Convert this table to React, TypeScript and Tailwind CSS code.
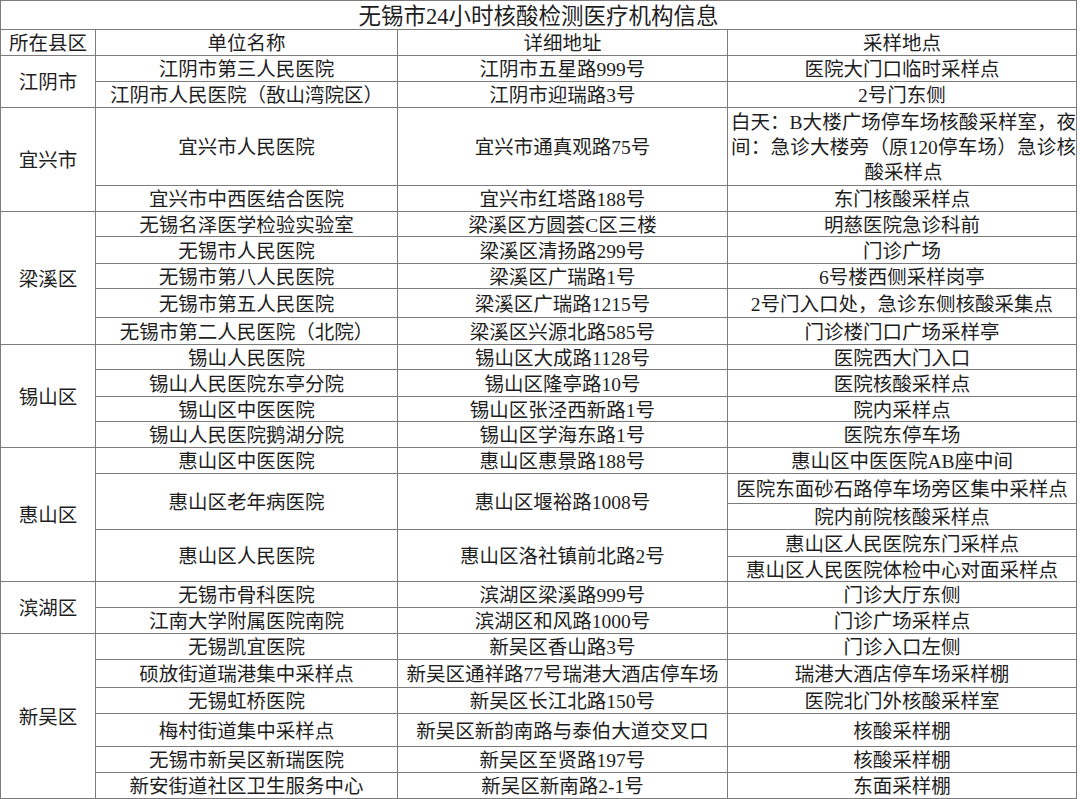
import React from "react";

type Entry = { name: string; addr: string; sites: string[] };
type Group = { district: string; entries: Entry[] };

const groups: Group[] = [
  {
    district: "江阴市",
    entries: [
      { name: "江阴市第三人民医院", addr: "江阴市五星路999号", sites: ["医院大门口临时采样点"] },
      { name: "江阴市人民医院（敔山湾院区）", addr: "江阴市迎瑞路3号", sites: ["2号门东侧"] },
    ],
  },
  {
    district: "宜兴市",
    entries: [
      { name: "宜兴市人民医院", addr: "宜兴市通真观路75号", sites: ["__MULTI__"] },
      { name: "宜兴市中西医结合医院", addr: "宜兴市红塔路188号", sites: ["东门核酸采样点"] },
    ],
  },
  {
    district: "梁溪区",
    entries: [
      { name: "无锡名泽医学检验实验室", addr: "梁溪区方圆荟C区三楼", sites: ["明慈医院急诊科前"] },
      { name: "无锡市人民医院", addr: "梁溪区清扬路299号", sites: ["门诊广场"] },
      { name: "无锡市第八人民医院", addr: "梁溪区广瑞路1号", sites: ["6号楼西侧采样岗亭"] },
      { name: "无锡市第五人民医院", addr: "梁溪区广瑞路1215号", sites: ["2号门入口处，急诊东侧核酸采集点"] },
      { name: "无锡市第二人民医院（北院）", addr: "梁溪区兴源北路585号", sites: ["门诊楼门口广场采样亭"] },
    ],
  },
  {
    district: "锡山区",
    entries: [
      { name: "锡山人民医院", addr: "锡山区大成路1128号", sites: ["医院西大门入口"] },
      { name: "锡山人民医院东亭分院", addr: "锡山区隆亭路10号", sites: ["医院核酸采样点"] },
      { name: "锡山区中医医院", addr: "锡山区张泾西新路1号", sites: ["院内采样点"] },
      { name: "锡山人民医院鹅湖分院", addr: "锡山区学海东路1号", sites: ["医院东停车场"] },
    ],
  },
  {
    district: "惠山区",
    entries: [
      { name: "惠山区中医医院", addr: "惠山区惠景路188号", sites: ["惠山区中医医院AB座中间"] },
      { name: "惠山区老年病医院", addr: "惠山区堰裕路1008号", sites: ["医院东面砂石路停车场旁区集中采样点", "院内前院核酸采样点"] },
      { name: "惠山区人民医院", addr: "惠山区洛社镇前北路2号", sites: ["惠山区人民医院东门采样点", "惠山区人民医院体检中心对面采样点"] },
    ],
  },
  {
    district: "滨湖区",
    entries: [
      { name: "无锡市骨科医院", addr: "滨湖区梁溪路999号", sites: ["门诊大厅东侧"] },
      { name: "江南大学附属医院南院", addr: "滨湖区和风路1000号", sites: ["门诊广场采样点"] },
    ],
  },
  {
    district: "新吴区",
    entries: [
      { name: "无锡凯宜医院", addr: "新吴区香山路3号", sites: ["门诊入口左侧"] },
      { name: "硕放街道瑞港集中采样点", addr: "新吴区通祥路77号瑞港大酒店停车场", sites: ["瑞港大酒店停车场采样棚"] },
      { name: "无锡虹桥医院", addr: "新吴区长江北路150号", sites: ["医院北门外核酸采样室"] },
      { name: "梅村街道集中采样点", addr: "新吴区新韵南路与泰伯大道交叉口", sites: ["核酸采样棚"] },
      { name: "无锡市新吴区新瑞医院", addr: "新吴区至贤路197号", sites: ["核酸采样棚"] },
      { name: "新安街道社区卫生服务中心", addr: "新吴区新南路2-1号", sites: ["东面采样棚"] },
    ],
  },
];

const spanClass: Record<number, string> = {
  1: "row-span-1",
  2: "row-span-2",
  3: "row-span-3",
  4: "row-span-4",
  5: "row-span-5",
  6: "row-span-6",
  7: "row-span-7",
};

const cell = "bg-white flex items-center justify-center text-center whitespace-nowrap pt-[2px]";

export default function App() {
  return (
    <div className="w-[1080px] h-[799px] bg-white">
      <div
        className="grid w-[1077px] gap-px p-px bg-[#7c7c7c] text-[#1e1e1e] text-[19.5px] leading-[25px] grid-cols-[94px_301px_329px_348px] grid-rows-[28px_25px_25px_25px_77px_25px_24px_26px_24px_28px_26px_24px_26px_24px_25px_25px_29px_25px_26px_24px_25px_25px_25px_27px_25px_32px_25px_25px]"
        style={{ fontFamily: '"Liberation Serif", "Noto Sans CJK SC", serif' }}
      >
        <div className={`${cell} col-span-4 text-[22.5px]`}>无锡市24小时核酸检测医疗机构信息</div>
        <div className={cell}>所在县区</div>
        <div className={cell}>单位名称</div>
        <div className={cell}>详细地址</div>
        <div className={cell}>采样地点</div>
        {groups.map((g) => {
          const total = g.entries.reduce((n, e) => n + e.sites.length, 0);
          return (
            <React.Fragment key={g.district}>
              <div className={`${cell} ${spanClass[total]}`}>{g.district}</div>
              {g.entries.map((e) => {
                const s = spanClass[e.sites.length];
                return (
                  <React.Fragment key={e.name}>
                    <div className={`${cell} ${s}`}>{e.name}</div>
                    <div className={`${cell} ${s}`}>{e.addr}</div>
                    {e.sites.map((site, i) =>
                      site === "__MULTI__" ? (
                        <div key={i} className="bg-white flex flex-col justify-center pl-[3px] pr-0 pt-[2px] whitespace-nowrap overflow-hidden">
                          <div className="text-justify [text-align-last:justify]">白天：B大楼广场停车场核酸采样室，夜</div>
                          <div className="text-justify [text-align-last:justify]">间：急诊大楼旁（原120停车场）急诊核</div>
                          <div className="text-center">酸采样点</div>
                        </div>
                      ) : (
                        <div key={i} className={cell}>{site}</div>
                      )
                    )}
                  </React.Fragment>
                );
              })}
            </React.Fragment>
          );
        })}
      </div>
    </div>
  );
}
